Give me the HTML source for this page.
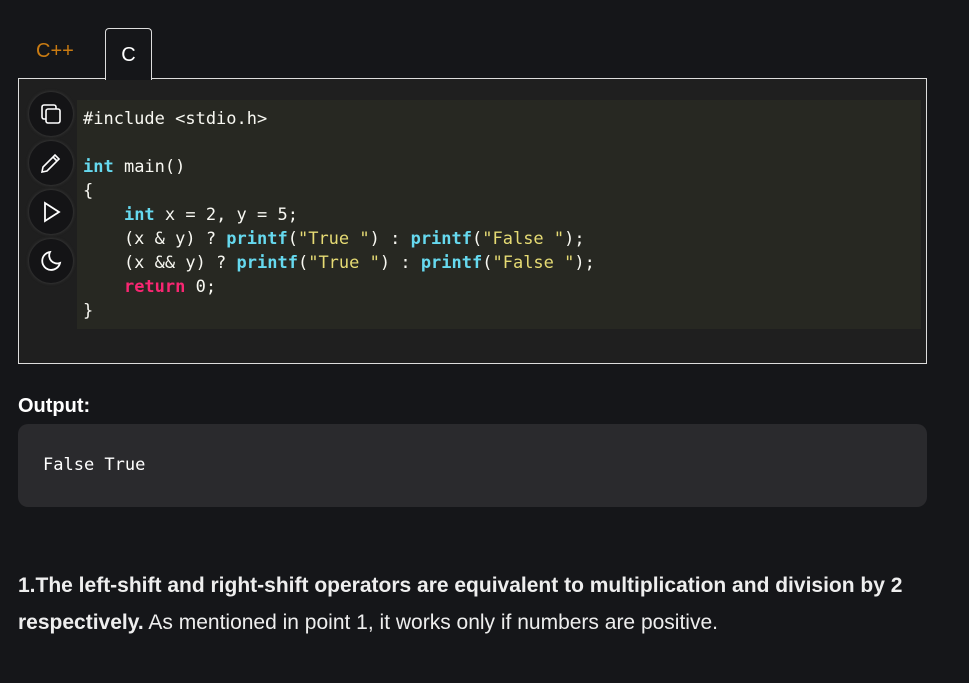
<!DOCTYPE html>
<html><head><style>
body{margin:0;background:#151619;width:969px;height:683px;overflow:hidden;font-family:"Liberation Sans",sans-serif;color:#fff;position:relative}
.tab{position:absolute;font-size:20px}
.cpp{left:36px;top:40px;color:#c97b12}
.ctab{left:105px;top:28px;width:45px;height:51px;border:1px solid #ddd;border-bottom:none;border-radius:4px 4px 0 0;background:#151619;text-align:center;line-height:52px;z-index:2;font-size:20px}
.box{position:absolute;left:18px;top:78px;width:907px;height:284px;border:1px solid #ddd;background:#1f1f1f}
.code{position:absolute;left:58px;top:21px;width:844px;height:229px;background:#272822}
pre{margin:0;position:absolute;left:6px;top:7px;font-family:"DejaVu Sans Mono","Liberation Mono",monospace;font-size:17px;line-height:24px;color:#f8f8f2}
.k{color:#66d9ef;font-weight:bold}.s{color:#e6db74}.r{color:#f92672;font-weight:bold}
.btn{position:absolute;left:10px;width:44px;height:44px;border-radius:50%;background:#141416;box-shadow:0 0 3px #444}
.btn svg{position:absolute;left:10px;top:10px}
h3{position:absolute;left:18px;top:395px;margin:0;font-size:20px}
.out{position:absolute;left:18px;top:424px;width:909px;height:83px;background:#2a2a2d;border-radius:10px}
.out span{position:absolute;left:25px;top:31px;font-family:"DejaVu Sans Mono",monospace;font-size:17px}
p{position:absolute;left:18px;top:567px;margin:0;width:945px;font-size:21px;line-height:37px;color:#eee}
</style></head><body>
<div class="tab cpp">C++</div>
<div class="tab ctab">C</div>
<div class="box">
 <div class="btn" style="top:13px"><svg width="24" height="24" viewBox="0 0 24 24" fill="none" stroke="#fff" stroke-width="1.6"><rect x="7" y="7" width="14" height="14" rx="2"/><path d="M17 7V5a2 2 0 0 0-2-2H5a2 2 0 0 0-2 2v10a2 2 0 0 0 2 2h2"/></svg></div>
 <div class="btn" style="top:62px"><svg width="24" height="24" viewBox="0 0 24 24" fill="none" stroke="#fff" stroke-width="1.6"><path d="M3 21l1-5L16 4l4 4L8 20z M14 6l4 4"/></svg></div>
 <div class="btn" style="top:111px"><svg width="24" height="24" viewBox="0 0 24 24" fill="none" stroke="#fff" stroke-width="1.8"><path d="M6 3l14 9-14 9z"/></svg></div>
 <div class="btn" style="top:160px"><svg width="24" height="24" viewBox="0 0 24 24" fill="none" stroke="#fff" stroke-width="1.8"><path d="M11 3a8 8 0 0 0 10 11A9 9 0 1 1 11 3z"/></svg></div>
 <div class="code"><pre>#include &lt;stdio.h&gt;

<span class="k">int</span> main()
{
    <span class="k">int</span> x = 2, y = 5;
    (x &amp; y) ? <span class="k">printf</span>(<span class="s">"True "</span>) : <span class="k">printf</span>(<span class="s">"False "</span>);
    (x &amp;&amp; y) ? <span class="k">printf</span>(<span class="s">"True "</span>) : <span class="k">printf</span>(<span class="s">"False "</span>);
    <span class="r">return</span> 0;
}</pre></div>
</div>
<h3>Output:</h3>
<div class="out"><span>False True</span></div>
<p><b>1.The left-shift and right-shift operators are equivalent to multiplication and division by 2 respectively.</b> As mentioned in point 1, it works only if numbers are positive.</p>
</body></html>
